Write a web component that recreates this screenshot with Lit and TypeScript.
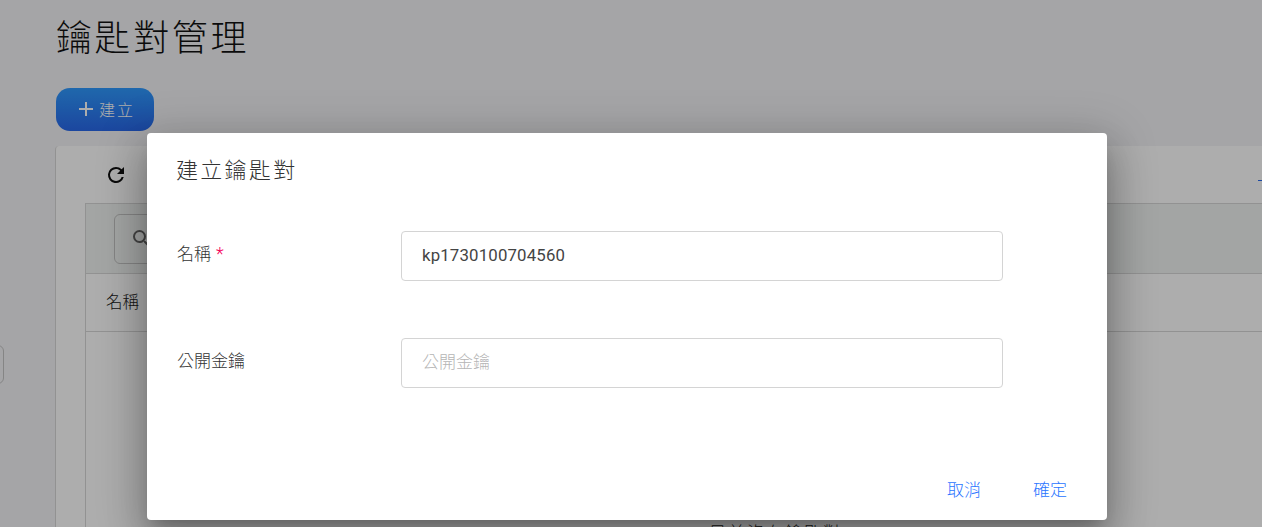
import { LitElement, html, css } from "lit";
import { customElement } from "lit/decorators.js";

@customElement("app-root")
export class AppRoot extends LitElement {
  static styles = css`
    :host {
      display: block;
      position: relative;
      width: 1262px;
      height: 527px;
      overflow: hidden;
      background: #f4f4f7;
      font-family: Roboto, "Noto Sans CJK TC", sans-serif;
      color: #212121;
    }
    .page {
      display: flex;
      flex-direction: column;
      align-items: flex-start;
      padding: 14px 0 0 56px;
    }
    .title {
      margin: 0;
      font-size: 36px;
      line-height: 50px;
      font-weight: 300;
      letter-spacing: 2.6px;
      color: #111;
    }
    .create {
      display: flex;
      align-items: center;
      gap: 4px;
      margin-top: 24px;
      width: 98px;
      height: 43px;
      border: 0;
      padding: 2px 0 0 21px;
      box-sizing: border-box;
      border-radius: 14px;
      background: linear-gradient(180deg, #2f9aff, #2968ea);
      color: #fff;
      font: 300 16px/1 Roboto, "Noto Sans CJK TC", sans-serif;
      letter-spacing: 2px;
    }
    .create svg {
      margin-top: -3px;
    }
    .card {
      align-self: stretch;
      margin: 15px -203px 0 -1px;
      height: 500px;
      background: #fff;
      border-radius: 4px;
      padding: 0 0 0 29px;
      border-left: 1px solid #d8d8d8;
    }
    .tools {
      display: flex;
      align-items: center;
      height: 57px;
      padding-left: 19px;
    }
    .table {
      border: 1px solid #d8d8d8;
      border-right: 0;
    }
    .filter {
      height: 70px;
      background: #f1f4f2;
      border-bottom: 1px solid #d8d8d8;
      padding: 10px 28px;
      box-sizing: border-box;
    }
    .search {
      width: 200px;
      height: 50px;
      box-sizing: border-box;
      border: 1px solid #c4c4c4;
      border-radius: 6px;
      display: flex;
      align-items: center;
      padding-left: 15px;
    }
    .head {
      height: 58px;
      box-sizing: border-box;
      border-bottom: 1px solid #d8d8d8;
      display: flex;
      align-items: center;
      padding: 0 0 3px 20px;
      font-size: 16.5px;
      font-weight: 300;
    }
    .empty {
      text-align: center;
      padding-top: 187px;
      font-size: 17px;
      font-weight: 300;
      letter-spacing: 2px;
    }
    .scrim {
      position: absolute;
      inset: 0;
      background: rgba(0, 0, 0, 0.32);
    }
    .edge {
      position: absolute;
      left: -10px;
      top: 345px;
      width: 12px;
      height: 37px;
      border: 1px solid #c4c4c4;
      border-radius: 6px;
    }
    .link {
      position: absolute;
      left: 1258px;
      top: 180px;
      width: 20px;
      height: 1px;
      background: #2a6cf0;
    }
    .dialog {
      position: absolute;
      left: 147px;
      top: 133px;
      width: 960px;
      height: 387px;
      box-sizing: border-box;
      background: #fff;
      border-radius: 4px;
      box-shadow: 0 11px 15px -7px rgba(0, 0, 0, 0.2),
        0 24px 38px 3px rgba(0, 0, 0, 0.18), 0 9px 46px 8px rgba(0, 0, 0, 0.18);
      padding: 21px 30px 0;
      display: flex;
      flex-direction: column;
    }
    .dialog h2 {
      margin: 0 0 0 -1px;
      font-size: 22px;
      line-height: 34px;
      font-weight: 300;
      letter-spacing: 2.3px;
      color: #333;
    }
    .form {
      display: flex;
      flex-direction: column;
      gap: 57px;
      margin-top: 43px;
    }
    .row {
      display: flex;
      align-items: flex-start;
    }
    .label {
      width: 224px;
      padding-top: 12px;
      font-size: 17px;
      line-height: 22px;
      font-weight: 300;
      color: #333;
    }
    .req {
      color: #f50057;
      margin-left: 5px;
      font-size: 18px;
    }
    .field {
      width: 602px;
      height: 50px;
      box-sizing: border-box;
      border: 1px solid #d4d4d4;
      border-radius: 4px;
      padding: 0 20px 2px;
      display: flex;
      align-items: center;
      font-size: 16.8px;
      letter-spacing: 0.17px;
      color: #444;
    }
    .ph {
      color: #b5b5b5;
      font-size: 17px;
      font-weight: 300;
      letter-spacing: 0;
      padding-bottom: 5px;
    }
    .actions {
      margin-top: auto;
      display: flex;
      justify-content: flex-end;
      gap: 52px;
      padding: 0 10px 19px 0;
    }
    .actions span {
      color: #2a75ff;
      font-size: 17px;
      line-height: 22px;
      font-weight: 300;
    }
  `;

  render() {
    return html`
      <div class="page">
        <h1 class="title">鑰匙對管理</h1>
        <button class="create">
          <svg width="18" height="18" viewBox="0 0 18 18"><path d="M9 2v14M2 9h14" stroke="#fff" stroke-width="2" fill="none"/></svg>
          <span>建立</span>
        </button>
        <div class="card">
          <div class="tools">
            <svg width="24" height="24" viewBox="0 0 24 24"><path fill="#111" d="M17.65 6.35A7.958 7.958 0 0 0 12 4a8 8 0 1 0 7.73 10h-2.08A6 6 0 1 1 12 6c1.66 0 3.14.69 4.22 1.78L13 11h7V4l-2.35 2.35z"/></svg>
          </div>
          <div class="table">
            <div class="filter">
              <div class="search">
                <svg width="24" height="24" viewBox="0 0 24 24"><path fill="#666" d="M15.5 14h-.79l-.28-.27A6.47 6.47 0 0 0 16 9.5 6.5 6.5 0 1 0 9.5 16c1.61 0 3.09-.59 4.23-1.57l.27.28v.79l5 4.99L20.49 19l-4.99-5zm-6 0C7.01 14 5 11.99 5 9.5S7.01 5 9.5 5 14 7.01 14 9.5 11.99 14 9.5 14z"/></svg>
              </div>
            </div>
            <div class="head">名稱</div>
            <div class="empty">目前沒有鑰匙對</div>
          </div>
        </div>
      </div>
      <div class="edge"></div>
      <div class="link"></div>
      <div class="scrim"></div>
      <div class="dialog">
        <h2>建立鑰匙對</h2>
        <div class="form">
          <div class="row">
            <div class="label">名稱<span class="req">*</span></div>
            <div class="field">kp1730100704560</div>
          </div>
          <div class="row">
            <div class="label">公開金鑰</div>
            <div class="field ph">公開金鑰</div>
          </div>
        </div>
        <div class="actions"><span>取消</span><span>確定</span></div>
      </div>
    `;
  }
}
